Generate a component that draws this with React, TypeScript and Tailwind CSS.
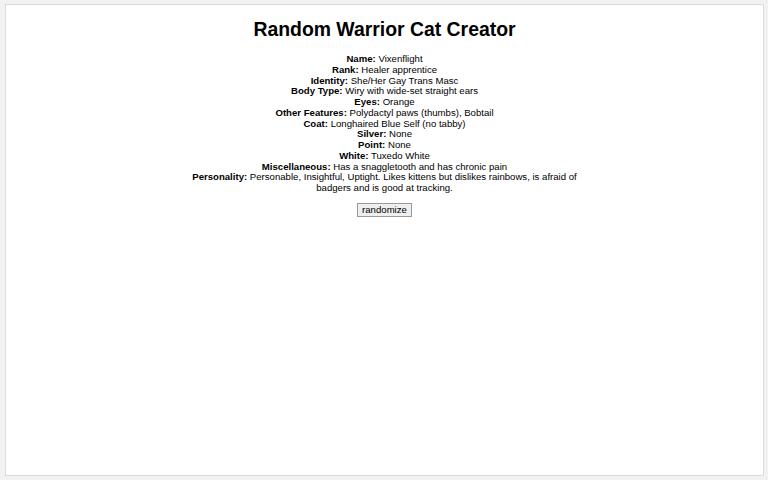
import React, { useState } from 'react';

const cat = {
  name: 'Vixenflight',
  rank: 'Healer apprentice',
  identity: 'She/Her Gay Trans Masc',
  body: 'Wiry with wide-set straight ears',
  eyes: 'Orange',
  other: 'Polydactyl paws (thumbs), Bobtail',
  coat: 'Longhaired Blue Self (no tabby)',
  silver: 'None',
  point: 'None',
  white: 'Tuxedo White',
  misc: 'Has a snaggletooth and has chronic pain',
  personality:
    'Personable, Insightful, Uptight. Likes kittens but dislikes rainbows, is afraid of badgers and is good at tracking.',
};

const Row: React.FC<{ label: string; value: string }> = ({ label, value }) => (
  <div>
    <span className="font-bold">{label}:</span> {value}
  </div>
);

const App: React.FC = () => {
  const [c] = useState(cat);

  return (
    <div className="h-[480px] w-[768px] bg-[#f2f2f2] pt-[4px] pl-[5px] pr-[4px] pb-[4px] font-['Liberation_Sans',Arial,sans-serif] text-black">
      <div className="h-full w-full border border-[#dcdcdc] bg-white">
        <h1 className="mt-[12px] text-center text-[19.4px] font-bold leading-[24px]">Random Warrior Cat Creator</h1>
        <div className="mx-auto mt-[13px] w-[400px] text-center text-[9.6px] leading-[10.75px]">
          <Row label="Name" value={c.name} />
          <Row label="Rank" value={c.rank} />
          <Row label="Identity" value={c.identity} />
          <Row label="Body Type" value={c.body} />
          <Row label="Eyes" value={c.eyes} />
          <Row label="Other Features" value={c.other} />
          <Row label="Coat" value={c.coat} />
          <Row label="Silver" value={c.silver} />
          <Row label="Point" value={c.point} />
          <Row label="White" value={c.white} />
          <Row label="Miscellaneous" value={c.misc} />
          <Row label="Personality" value={c.personality} />
        </div>
        <div className="mt-[9px] flex justify-center">
          <button
            type="button"
            className="border border-[#9a9a9a] bg-[#efefef] px-[4px] text-[9.6px] leading-[12px] text-black"
          >
            randomize
          </button>
        </div>
      </div>
    </div>
  );
};

export default App;
